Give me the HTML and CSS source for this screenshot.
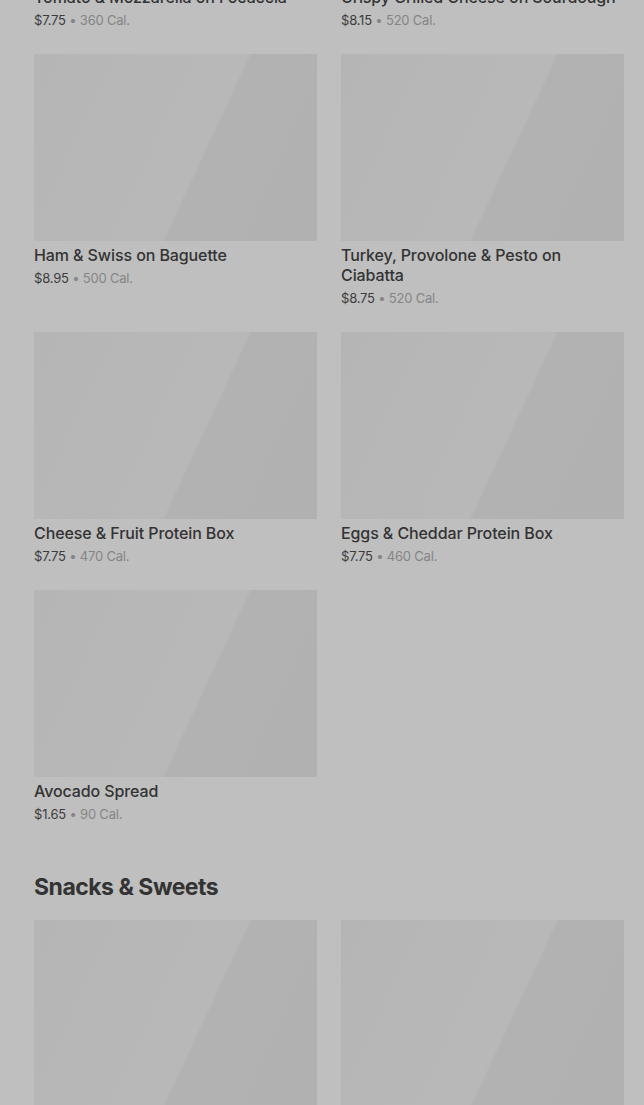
FILE: index.html
```html
<!DOCTYPE html>
<html lang="en">
<head>
  <meta charset="UTF-8">
  <meta name="viewport" content="width=device-width, initial-scale=1.0">
  <title>Menu</title>
  <link rel="stylesheet" href="styles.css">
</head>
<body>
  <main class="menu">

    <section class="category">
      <ul class="items">
        <li class="item">
          <div class="thumb"></div>
          <h3 class="name">Tomato &amp; Mozzarella on Focaccia</h3>
          <p class="meta"><span class="price">$7.75</span> • 360 Cal.</p>
        </li>
        <li class="item">
          <div class="thumb"></div>
          <h3 class="name">Crispy Grilled Cheese on Sourdough</h3>
          <p class="meta"><span class="price">$8.15</span> • 520 Cal.</p>
        </li>
        <li class="item">
          <div class="thumb"></div>
          <h3 class="name">Ham &amp; Swiss on Baguette</h3>
          <p class="meta"><span class="price">$8.95</span> • 500 Cal.</p>
        </li>
        <li class="item">
          <div class="thumb"></div>
          <h3 class="name">Turkey, Provolone &amp; Pesto on Ciabatta</h3>
          <p class="meta"><span class="price">$8.75</span> • 520 Cal.</p>
        </li>
        <li class="item">
          <div class="thumb"></div>
          <h3 class="name">Cheese &amp; Fruit Protein Box</h3>
          <p class="meta"><span class="price">$7.75</span> • 470 Cal.</p>
        </li>
        <li class="item">
          <div class="thumb"></div>
          <h3 class="name">Eggs &amp; Cheddar Protein Box</h3>
          <p class="meta"><span class="price">$7.75</span> • 460 Cal.</p>
        </li>
        <li class="item">
          <div class="thumb"></div>
          <h3 class="name">Avocado Spread</h3>
          <p class="meta"><span class="price">$1.65</span> • 90 Cal.</p>
        </li>
      </ul>
    </section>

    <section class="category">
      <h2 class="category-title">Snacks &amp; Sweets</h2>
      <ul class="items">
        <li class="item">
          <div class="thumb"></div>
        </li>
        <li class="item">
          <div class="thumb"></div>
        </li>
      </ul>
    </section>

  </main>
</body>
</html>
```

FILE: styles.css
```css
* {
  margin: 0;
  padding: 0;
  box-sizing: border-box;
}

html {
  background-color: #bfbfbf;
}

body {
  font-family: "Inter", "Roboto", "Helvetica", sans-serif;
  color: #333333;
  overflow: hidden;
}

.menu {
  margin-top: -204px;
  padding: 0 20px 0 34px;
}

.category-title {
  margin: 47px 0 17px;
  font-size: 23px;
  line-height: 32px;
  font-weight: 700;
  letter-spacing: -0.5px;
  color: #333333;
}

.items {
  list-style: none;
  display: grid;
  grid-template-columns: 1fr 1fr;
  column-gap: 24px;
  row-gap: 24px;
}

.thumb {
  height: 187px;
  background: linear-gradient(115deg, #b5b5b5 0%, #b7b7b7 30%, #b8b8b8 58%, #b2b2b2 59%, #b1b1b1 100%);
}

.name {
  margin-top: 4px;
  font-size: 16px;
  line-height: 20px;
  font-weight: 500;
  letter-spacing: -0.1px;
  color: #333333;
}

.meta {
  margin-top: 3px;
  font-size: 13px;
  line-height: 20px;
  letter-spacing: -0.2px;
  color: #858585;
}

.price {
  color: #3d3d3d;
}
```
